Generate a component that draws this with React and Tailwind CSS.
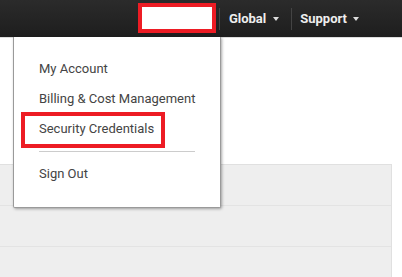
export default function App() {
  const menu = ['My Account', 'Billing & Cost Management', 'Security Credentials'];

  return (
    <div className="relative h-[277px] w-[402px] overflow-hidden bg-white font-['Roboto',sans-serif]">
      <header className="flex h-[38px] items-center justify-end border-b border-[#dddddd] bg-gradient-to-b from-[#2b2b2b] to-[#1e1e1e] pr-[43px]">
        <div className="mb-[1px] h-[30px] w-[78px] border-4 border-[#ed1c24] bg-white" />
        <div className="ml-[3px] h-[22px] w-px bg-[#444444]" />
        <button className="ml-[9px] flex items-center text-[13px] font-bold text-[#eeeeee]">
          Global
          <span className="ml-[7px] h-0 w-0 border-x-[3px] border-t-[4px] border-x-transparent border-t-[#dddddd]" />
        </button>
        <div className="ml-[12px] h-[22px] w-px bg-[#444444]" />
        <button className="ml-[8px] flex items-center text-[13px] font-bold text-[#eeeeee]">
          Support
          <span className="ml-[6px] h-0 w-0 border-x-[3px] border-t-[4px] border-x-transparent border-t-[#dddddd]" />
        </button>
      </header>

      <main className="pt-[126px]">
        <div className="w-[392px] border-r border-t border-[#e0e0e0] bg-[#eeeeee]">
          <div className="h-[41px] border-b border-[#e3e3e3]" />
          <div className="h-[41px] border-b border-[#e3e3e3]" />
          <div className="h-[41px]" />
        </div>
      </main>

      <div className="absolute left-[13px] top-[37px] h-[171px] w-[208px] rounded-b-[2px] border border-t-0 border-[#9a9a9a] bg-white pb-[17px] pt-[17px] shadow-[1px_1px_3px_rgba(0,0,0,0.35)]">
        {menu.map((item) => (
          <div key={item} className="flex h-[30px] items-center pl-[25px] text-[13px] text-[#444444]">
            {item}
          </div>
        ))}
        <div className="mb-[7px] ml-[25px] mt-[7px] h-px w-[156px] bg-[#cccccc]" />
        <div className="flex h-[30px] items-center pl-[25px] text-[13px] text-[#444444]">Sign Out</div>
        <div className="absolute left-[7px] top-[75px] h-[36px] w-[144px] border-4 border-[#ed1c24]" />
      </div>
    </div>
  );
}
